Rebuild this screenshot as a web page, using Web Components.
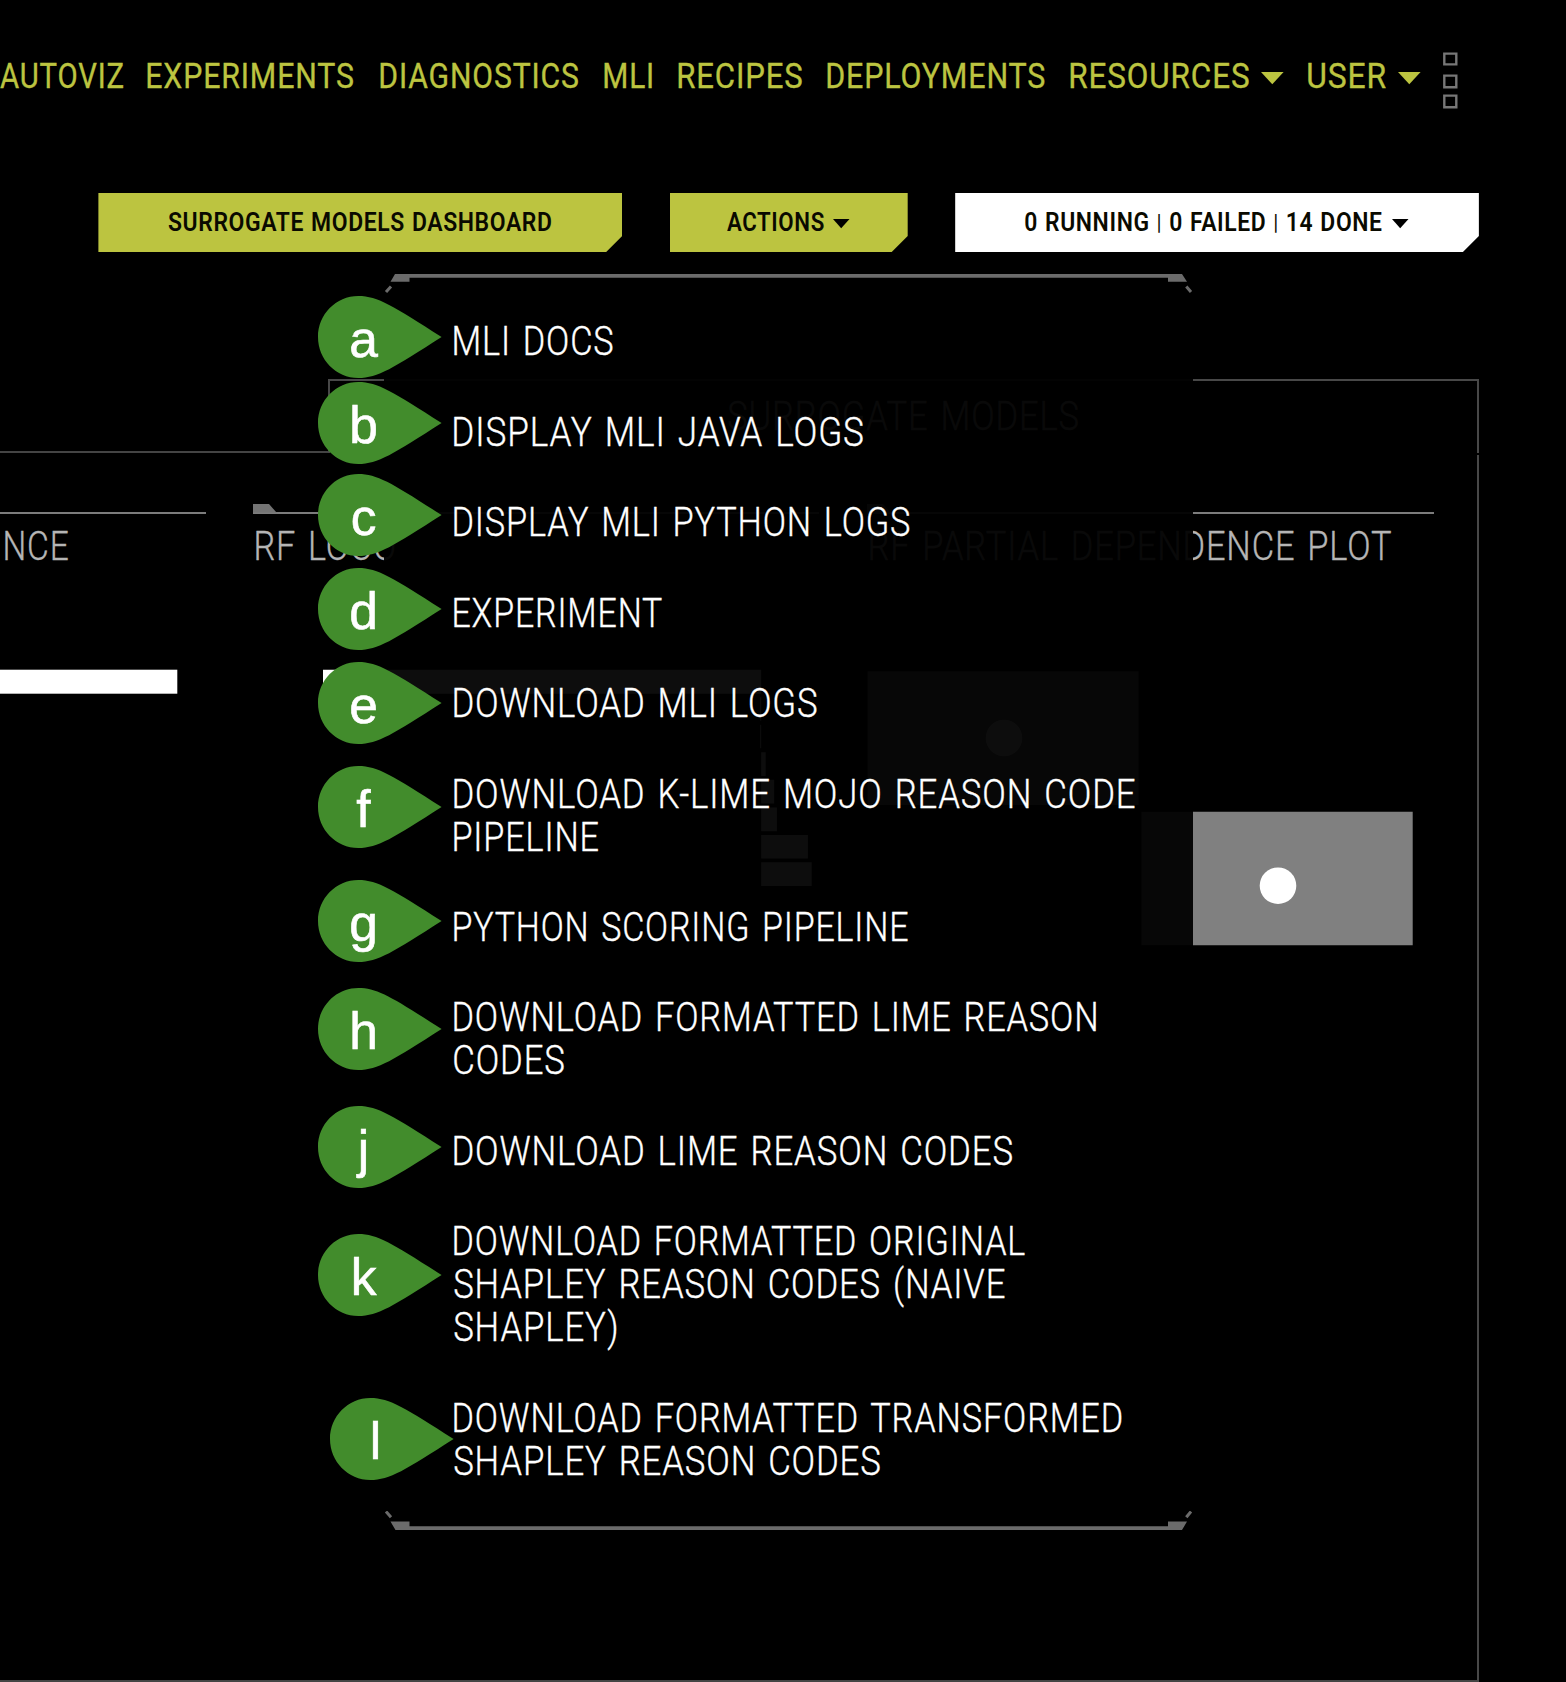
<!DOCTYPE html>
<html lang="en">
<head>
<meta charset="utf-8">
<title>MLI Surrogate Models</title>
<style>
html{background:#000}
body{margin:0;background:#000;width:1566px;height:1682px;overflow:hidden;font-family:Roboto,"Liberation Sans",sans-serif}
</style>
</head>
<body>
<mli-page></mli-page>
<script>
const define = (name, html, setup) => customElements.define(name, class extends HTMLElement {
  connectedCallback() {
    if (this.shadowRoot) return;
    const root = this.attachShadow({ mode: 'open' });
    root.innerHTML = typeof html === 'function' ? html(this) : html;
    if (setup) setup(this, root);
  }
});

// Action menu entry: one or more text lines
define('menu-item', `<style>:host{display:flex;flex-direction:column;line-height:43px;font-size:39.8px;font-weight:300;color:#fff;letter-spacing:1px;word-spacing:3px;-webkit-text-stroke:.35px #fff}</style><slot></slot>`);

// Framed floating menu
define('action-menu', `<style>
:host{display:block;position:absolute;left:384px;top:273px;width:809.3px;height:1259px;background:rgba(0,0,0,.95)}
.wrap{display:flex;flex-direction:column;height:100%}
svg{display:block;flex:none}
.items{flex:1;display:flex;flex-direction:column;gap:47.43px;padding:26.4px 0 0 69.5px}
</style><div class="wrap">
<svg width="809" height="21" fill="#6b6b6b"><path d="M11 1H798L803 8.7H784V4.7H25.5V8.7H6.5Z"/><path d="M2 19L7 13.5M807 19L802.3 13.5" stroke="#6b6b6b" stroke-width="3"/></svg>
<div class="items"><slot></slot></div>
<svg width="809" height="21" fill="#6b6b6b"><path d="M11.5 19H798L803 10.600H784V15.300H25.5V10.600H6.5Z"/><path d="M2 .5L7 6.2M807 .5L802.3 6.2" stroke="#6b6b6b" stroke-width="3"/></svg>
</div>`);

// Lettered callout pin
define('pin-mark', el => `<style>
:host{display:block;position:absolute;left:${el.getAttribute('x')}px;top:${el.getAttribute('y')}px;width:124px;height:82px}
svg{position:absolute;left:0;top:0}
span{position:absolute;left:0;top:0;width:91px;text-align:center;font:51.5px/60px "Liberation Sans",Arial,sans-serif;padding-top:13px;color:#fff;-webkit-text-stroke:.6px #fff}
</style><svg width="124" height="82"><path fill="#428c2c" d="M40.3 0C60 0 75 10 123.6 41C75 72 60 82 40.3 82C18 82 0 63.6 0 41S18 0 40.3 0Z"/></svg><span><slot></slot></span>`);

define('nav-bar', `<style>
:host{display:flex;height:40px;line-height:40px;font-size:35.6px;font-weight:400;color:#bcc440;padding-top:56.3px;letter-spacing:1px;-webkit-text-stroke:.35px #bcc440}
fit-text{flex:none}
svg{flex:none;display:block}
</style>
<fit-text w="123">AUTOVIZ</fit-text>
<fit-text w="206" style="margin-left:24px">EXPERIMENTS</fit-text>
<fit-text w="198" style="margin-left:26.5px">DIAGNOSTICS</fit-text>
<fit-text w="48" style="margin-left:26.3px">MLI</fit-text>
<fit-text w="123.8" style="margin-left:26px">RECIPES</fit-text>
<fit-text w="217.4" style="margin-left:25.7px">DEPLOYMENTS</fit-text>
<fit-text w="178.6" style="margin-left:25.2px">RESOURCES</fit-text>
<svg width="23" height="13" style="margin:15.6px 0 0 12.6px" fill="#bcc440"><path d="M0 0H22.6L11.3 12.2Z"/></svg>
<fit-text w="78.2" style="margin-left:23.6px">USER</fit-text>
<svg width="23" height="13" style="margin:15.6px 0 0 12.5px" fill="#bcc440"><path d="M0 0H22.6L11.3 12.2Z"/></svg>
<svg width="15" height="57" style="margin:-4px 0 0 22px" fill="none" stroke="#777" stroke-width="2.4"><path d="M1.3 1.6H13.3V12.4H1.3ZM1.3 23.6H13.3V35.2H1.3ZM1.3 43.6H13.3V55.2H1.3Z"/></svg>`);

// Button with a clipped lower right corner
define('cut-button', el => `<style>
:host{display:flex;align-items:center;justify-content:center;flex:none;box-sizing:border-box;width:${el.getAttribute('w')}px;height:59.5px;padding-bottom:1.4px;gap:9.5px;
background:${el.getAttribute('bg')};color:#0a0a00;font-size:26.7px;line-height:30px;font-weight:600;letter-spacing:.7px;word-spacing:1px;clip-path:polygon(0 0,100% 0,100% 43px,calc(100% - 16.5px) 100%,0 100%)}
svg{display:block;margin-top:3px}
</style><slot></slot>${el.hasAttribute('caret') ? '<svg width="17" height="10"><path d="M0 0H16.5L8.2 9.2Z" fill="#000"/></svg>' : ''}`);

define('tool-bar', `<style>
:host{display:flex;padding:96.7px 0 0 98.4px;gap:47.5px}
b{font-weight:500;font-size:.8em;line-height:1;position:relative;top:-1px}
</style>
<cut-button w="523.8" bg="#bcc440"><fit-text w="383.6">SURROGATE MODELS DASHBOARD</fit-text></cut-button>
<cut-button w="238" bg="#bcc440" caret><fit-text w="97">ACTIONS</fit-text></cut-button>
<cut-button w="523.7" bg="#fff" caret><fit-text w="357">0 RUNNING <b>|</b> 0 FAILED <b>|</b> 14 DONE</fit-text></cut-button>`);

// Dashboard card with a rule, a title and a chart
define('plot-card', el => `<style>
:host{display:block;flex:none;width:${el.getAttribute('w')}px;color:#b5b5b5}
.rule{height:7.4px;border-bottom:2px solid #7c7c7c}
.rule svg{margin-top:-.3px}
svg{display:block;overflow:visible}
.title{font-size:39.8px;line-height:43px;font-weight:300;letter-spacing:1px;word-spacing:3px;-webkit-text-stroke:.35px #b5b5b5;padding:11px 0 0 ${el.getAttribute('pad')}px}
.chart{margin-top:89.2px}
</style><div class="rule">${el.hasAttribute('tab') ? '<svg width="24" height="8"><path d="M0 0H16L23.5 8.5H0Z" fill="#747474"/></svg>' : ''}</div>
<div class="title"><slot></slot></div><div class="chart"><slot name="chart"></slot></div>`);

define('mli-dashboard', `<style>
:host{display:block;padding-top:126.6px}
.tabs{display:flex;height:74px}
.left{width:328px;box-sizing:border-box;border-bottom:2px solid #444}
.tab{width:1150.7px;box-sizing:border-box;border:2px solid #484848;border-bottom:0;text-align:center;color:#b5b5b5;font-size:39.8px;line-height:43px;font-weight:300;letter-spacing:1px;word-spacing:3px;-webkit-text-stroke:.35px #b5b5b5;display:flex;justify-content:center;padding:13.5px 1px 0 0}
.panel{margin-top:2px;width:1478.7px;height:1226.9px;box-sizing:border-box;border-right:2px solid #484848;border-bottom:2px solid #444;display:flex;gap:47.6px;padding-top:49.4px}
svg{display:block;overflow:visible}
</style>
<div class="tabs"><div class="left"></div><div class="tab"><fit-text w="350.4">SURROGATE MODELS</fit-text></div></div>
<div class="panel">
<plot-card w="205.7" pad="5.3"><fit-text w="63.2">NCE</fit-text>
<svg slot="chart" width="205" height="280" fill="#fff"><rect y="12.7" width="177.3" height="24"/></svg></plot-card>
<plot-card w="565.7" pad="2.4" tab><fit-text w="138.5">RF LOCO</fit-text>
<svg slot="chart" width="565" height="280" fill="#fff"><path d="M70 12.7H508.2V36.7H70ZM507.2 40.3h1v23.5h-1ZM507.2 67.8h1v23.5h-1ZM508.2 95.3h4.5v23.7h-4.5ZM508.2 122.8h13v23.7h-13ZM508.2 150.5h15.7v23.7h-15.7ZM508.2 178h46.7v23.5h-46.7ZM508.2 205.3h50.5v23.7h-50.5Z"/></svg></plot-card>
<plot-card w="567.6" pad="3.5" tab><fit-text w="520.8">RF PARTIAL DEPENDENCE PLOT</fit-text>
<svg slot="chart" width="565" height="300"><path fill="#808080" d="M.5 14.3H271.7V148H.5ZM274.4 154.7H545.7V288.3H274.4Z"/><g fill="#fff"><circle cx="137" cy="81" r="18.3"/><circle cx="411" cy="228.7" r="18.3"/></g></svg></plot-card>
</div>`);

define('mli-page', `<style>
:host{display:block;position:relative;width:1566px;height:1682px;overflow:hidden;background:#000}
</style>
<nav-bar></nav-bar>
<tool-bar></tool-bar>
<mli-dashboard></mli-dashboard>
<action-menu>
<menu-item><fit-text w="159.1">MLI DOCS</fit-text></menu-item>
<menu-item><fit-text w="409.4">DISPLAY MLI JAVA LOGS</fit-text></menu-item>
<menu-item><fit-text w="455.9">DISPLAY MLI PYTHON LOGS</fit-text></menu-item>
<menu-item><fit-text w="207.7">EXPERIMENT</fit-text></menu-item>
<menu-item><fit-text w="363.1">DOWNLOAD MLI LOGS</fit-text></menu-item>
<menu-item><fit-text w="681">DOWNLOAD K-LIME MOJO REASON CODE</fit-text><fit-text w="144.5">PIPELINE</fit-text></menu-item>
<menu-item><fit-text w="454">PYTHON SCORING PIPELINE</fit-text></menu-item>
<menu-item><fit-text w="641.8">DOWNLOAD FORMATTED LIME REASON</fit-text><fit-text w="110.3">CODES</fit-text></menu-item>
<menu-item><fit-text w="558.5">DOWNLOAD LIME REASON CODES</fit-text></menu-item>
<menu-item><fit-text w="570.5">DOWNLOAD FORMATTED ORIGINAL</fit-text><fit-text w="550.8">SHAPLEY REASON CODES (NAIVE</fit-text><fit-text w="161.9">SHAPLEY)</fit-text></menu-item>
<menu-item><fit-text w="667.4">DOWNLOAD FORMATTED TRANSFORMED</fit-text><fit-text w="426.3">SHAPLEY REASON CODES</fit-text></menu-item>
</action-menu>
<pin-mark x="318" y="296">a</pin-mark>
<pin-mark x="318" y="382">b</pin-mark>
<pin-mark x="318" y="474">c</pin-mark>
<pin-mark x="318" y="568">d</pin-mark>
<pin-mark x="318" y="662">e</pin-mark>
<pin-mark x="318" y="766">f</pin-mark>
<pin-mark x="318" y="880">g</pin-mark>
<pin-mark x="318" y="988">h</pin-mark>
<pin-mark x="318" y="1106">j</pin-mark>
<pin-mark x="318" y="1234">k</pin-mark>
<pin-mark x="330" y="1398">l</pin-mark>`);

// Condenses a line of text so that its ink spans exactly w pixels
const pen = document.createElement('canvas').getContext('2d');
define('fit-text', el => `<style>
:host{display:block;width:${el.getAttribute('w')}px;white-space:nowrap}
span{display:inline-block;transform-origin:0 50%;vertical-align:top}
</style><span><slot></slot></span>`, (el, root) => {
  const span = root.querySelector('span'), cs = getComputedStyle(span);
  pen.font = `${cs.fontWeight} ${cs.fontSize} ${cs.fontFamily}`;
  const m = pen.measureText(el.textContent);
  const left = -m.actualBoundingBoxLeft;
  const right = m.width - m.actualBoundingBoxRight + (parseFloat(cs.letterSpacing) || 0);
  const scale = el.getAttribute('w') / (span.getBoundingClientRect().width - left - right);
  span.style.transform = `translateX(${-left * scale}px) scaleX(${scale})`;
});
</script>
</body>
</html>
